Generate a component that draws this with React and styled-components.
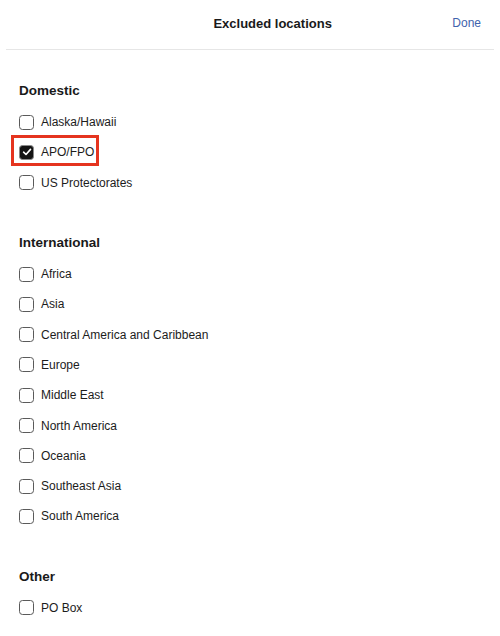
import React, { useState } from 'react';
import styled, { createGlobalStyle } from 'styled-components';

const GlobalStyle = createGlobalStyle`
  body {
    margin: 0;
    background: #fff;
    font-family: "Liberation Sans", Arial, sans-serif;
    color: #1c1c1c;
  }
`;

const sections = [
  { title: 'Domestic', items: ['Alaska/Hawaii', 'APO/FPO', 'US Protectorates'] },
  {
    title: 'International',
    items: [
      'Africa',
      'Asia',
      'Central America and Caribbean',
      'Europe',
      'Middle East',
      'North America',
      'Oceania',
      'Southeast Asia',
      'South America',
    ],
  },
  { title: 'Other', items: ['PO Box'] },
];

const App = () => {
  const [checked, setChecked] = useState({ 'APO/FPO': true });
  const toggle = (name) => setChecked((c) => ({ ...c, [name]: !c[name] }));

  return (
    <>
      <GlobalStyle />
      <StyledPage>
        <Header>
          <Title>Excluded locations</Title>
          <DoneButton>Done</DoneButton>
        </Header>
        <Body>
          {sections.map((s) => (
            <Section key={s.title}>
              <SectionTitle>{s.title}</SectionTitle>
              {s.items.map((item) => (
                <Row
                  key={item}
                  $highlight={item === 'APO/FPO'}
                  onClick={() => toggle(item)}
                >
                  <Box $checked={!!checked[item]}>
                    {checked[item] && (
                      <svg width="10" height="10" viewBox="0 0 10 10">
                        <path
                          d="M1.6 5.2 L4 7.5 L8.5 2.4"
                          fill="none"
                          stroke="#fff"
                          strokeWidth="1.6"
                          strokeLinecap="round"
                          strokeLinejoin="round"
                        />
                      </svg>
                    )}
                  </Box>
                  <Label>{item}</Label>
                </Row>
              ))}
            </Section>
          ))}
        </Body>
      </StyledPage>
    </>
  );
};

const StyledPage = styled.div`
  width: 500px;
  min-height: 636px;
  background: #fff;
`;

const Header = styled.div`
  display: flex;
  align-items: center;
  padding: 0 19px 0 87px;
  margin: 0 6px;
  border-bottom: 1px solid #e6e6e6;
  box-sizing: border-box;
  height: 50px;
`;

const Title = styled.div`
  flex: 1;
  text-align: center;
  font-size: 13px;
  font-weight: bold;
  color: #1a1a1a;
  padding-bottom: 3px;
`;

const DoneButton = styled.button`
  background: transparent;
  border: none;
  padding: 0 0 3px;
  margin-right: -6px;
  font-family: inherit;
  font-size: 12px;
  color: #3f63ad;
  cursor: pointer;
`;

const Body = styled.div`
  padding: 31px 0 0 19px;
  display: flex;
  flex-direction: column;
  gap: 35px;
`;

const Section = styled.div`
  display: flex;
  flex-direction: column;
`;

const SectionTitle = styled.div`
  height: 20px;
  line-height: 20px;
  margin-bottom: 6px;
  font-size: 13.5px;
  font-weight: bold;
  color: #1a1a1a;
`;

const Row = styled.div`
  position: relative;
  height: 30.3px;
  display: flex;
  align-items: center;
  gap: 7px;
  cursor: pointer;
  align-self: flex-start;
  ${({ $highlight }) =>
    $highlight &&
    `
    &::after {
      content: '';
      position: absolute;
      left: -8px;
      top: -2px;
      width: 88px;
      height: 31px;
      border: 3px solid #e5341f;
      box-sizing: border-box;
      pointer-events: none;
    }
  `}
`;

const Box = styled.span`
  width: 15px;
  height: 15px;
  box-sizing: border-box;
  border-radius: 3.5px;
  border: 1.3px solid ${({ $checked }) => ($checked ? '#8a8a8a' : '#5a5a5a')};
  background: ${({ $checked }) => ($checked ? '#141414' : '#fff')};
  display: flex;
  align-items: center;
  justify-content: center;
`;

const Label = styled.span`
  font-size: 12px;
  color: #1c1c1c;
`;

export default App;
